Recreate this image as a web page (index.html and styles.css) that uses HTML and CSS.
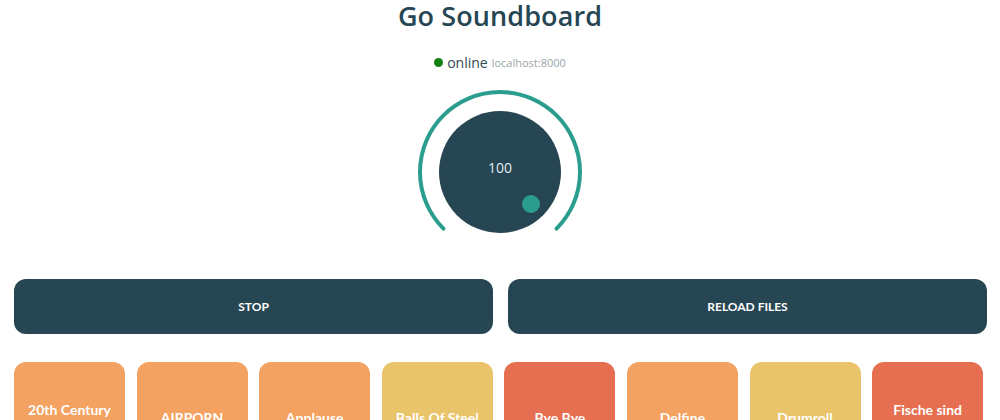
FILE: index.html
```html
<!DOCTYPE html>
<html lang="en">
<head>
<meta charset="utf-8">
<title>Go Soundboard</title>
<link rel="stylesheet" href="styles.css">
</head>
<body>
<header class="header">
  <h1 class="title">Go Soundboard</h1>
  <div class="status">
    <span class="status-dot"></span>
    <span class="status-text">online</span>
    <span class="status-host">localhost:8000</span>
  </div>
</header>
<section class="knob-wrap">
  <svg class="knob" width="164" height="150" viewBox="0 0 164 150">
    <path d="M 25.43 140.57 A 80 80 0 1 1 138.57 140.57" fill="none" stroke="#2a9d8f" stroke-width="4" stroke-linecap="round"/>
    <circle cx="82" cy="84" r="61" fill="#264653"/>
    <text x="82" y="81" text-anchor="middle" class="knob-value">100</text>
    <circle cx="113" cy="116" r="9" fill="#2a9d8f"/>
  </svg>
</section>
<section class="controls">
  <button class="control">STOP</button>
  <button class="control">RELOAD FILES</button>
</section>
<section class="tiles">
  <div class="tile tile-orange"><span>20th Century Fox</span></div>
  <div class="tile tile-orange"><span>AIRPORN</span></div>
  <div class="tile tile-orange"><span>Applause</span></div>
  <div class="tile tile-yellow"><span>Balls Of Steel</span></div>
  <div class="tile tile-red"><span>Bye Bye</span></div>
  <div class="tile tile-orange"><span>Delfine</span></div>
  <div class="tile tile-yellow"><span>Drumroll</span></div>
  <div class="tile tile-red"><span>Fische sind Freunde</span></div>
</section>
</body>
</html>
```

FILE: styles.css
```css
* { box-sizing: border-box; }
html, body { margin: 0; padding: 0; background: #ffffff; }
body {
  font-family: "Open Sans", "Liberation Sans", sans-serif;
  color: #264653;
  overflow: hidden;
}
.header {
  display: flex;
  flex-direction: column;
  align-items: center;
}
.title {
  margin: 0;
  font-size: 27px;
  line-height: 32px;
  font-weight: 600;
  color: #264653;
  letter-spacing: 0.1px;
}
.status {
  margin-top: 20px;
  height: 20px;
  display: flex;
  align-items: center;
  gap: 4px;
}
.status-dot {
  width: 9px;
  height: 9px;
  border-radius: 50%;
  background: #128012;
}
.status-text {
  font-size: 14px;
  font-weight: 500;
  color: #2d4a55;
}
.status-host {
  font-size: 11px;
  color: #9aa6ab;
}
.knob-wrap {
  margin-top: 16px;
  display: flex;
  justify-content: center;
}
.knob { display: block; }
.knob-value {
  font-family: "Open Sans", sans-serif;
  font-size: 14px;
  fill: #e3e9eb;
  dominant-baseline: middle;
}
.controls {
  margin-top: 41px;
  padding: 0 13px 0 14px;
  display: grid;
  grid-template-columns: 1fr 1fr;
  gap: 15px;
}
.control {
  height: 55px;
  border: none;
  border-radius: 12px;
  background: #264653;
  color: #ffffff;
  font-family: "Lato", "Open Sans", sans-serif;
  font-weight: 700;
  font-size: 12px;
}
.tiles {
  margin-top: 28px;
  padding-left: 14px;
  display: flex;
  gap: 11.6px;
}
.tile {
  width: 111px;
  height: 111px;
  flex: none;
  border-radius: 12px;
  display: flex;
  align-items: center;
  justify-content: center;
  text-align: center;
  padding: 0 8px;
  color: #ffffff;
  font-family: "Lato", "Open Sans", sans-serif;
  font-weight: 700;
  font-size: 14px;
  line-height: 17px;
}
.tile-orange { background: #f4a261; }
.tile-yellow { background: #e9c46a; }
.tile-red { background: #e76f51; }
```
